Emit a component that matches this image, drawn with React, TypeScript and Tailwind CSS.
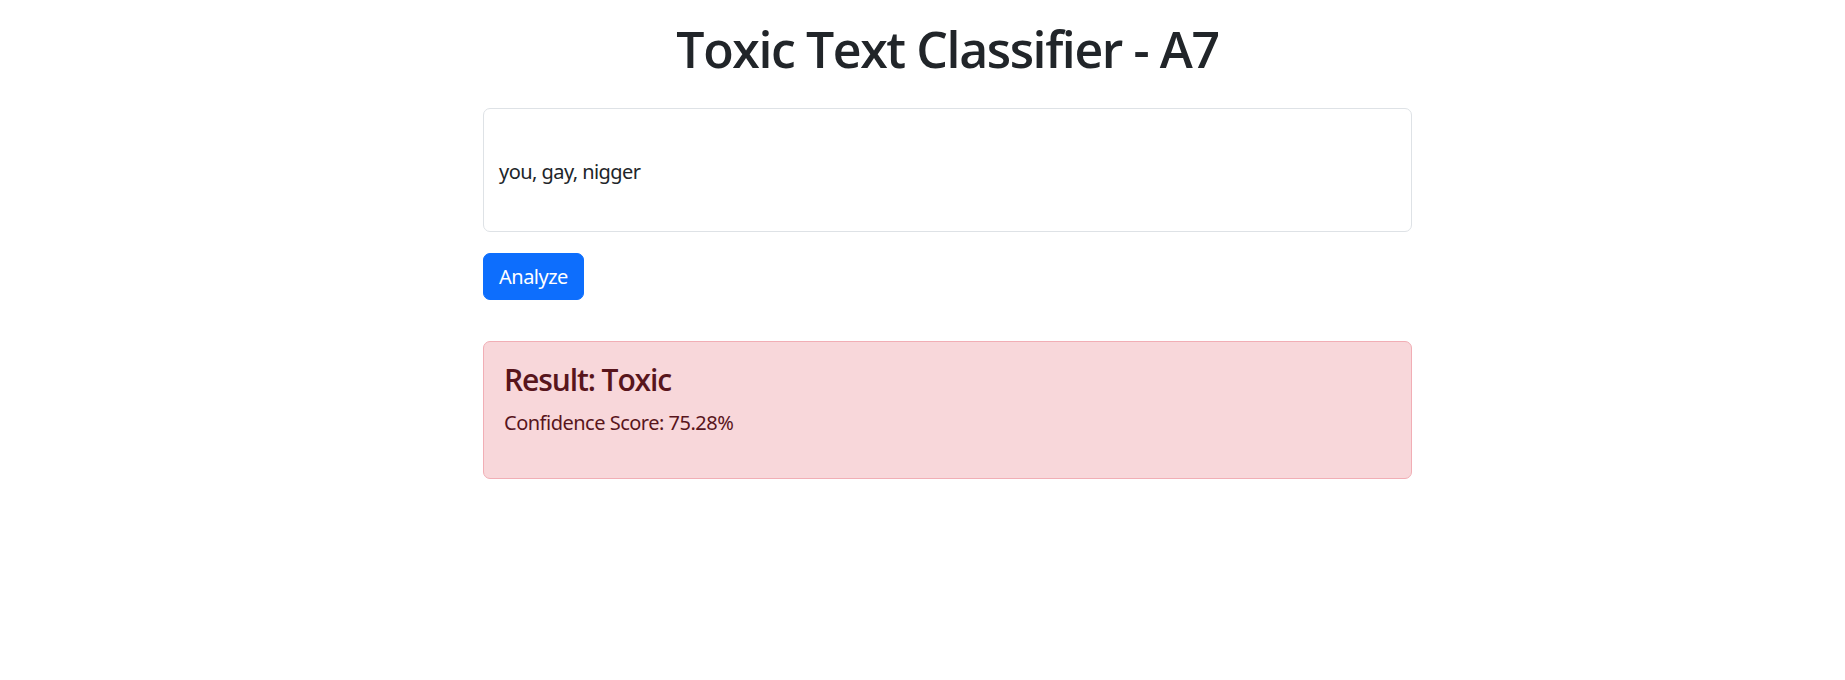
export default function App() {
  return (
    <div className="min-h-[680px] bg-white pl-[483px] font-['Noto_Sans',sans-serif] text-[#212529]">
      <div className="w-[929px] pt-[19px]">
        {/* Title */}
        <h1 className="text-center font-['Open_Sans',sans-serif] text-[50px] font-semibold leading-[1.2] tracking-[-1.4px]">
          Toxic Text Classifier - A7
        </h1>

        {/* Input */}
        <textarea
          className="mt-[29px] block h-[124px] w-full resize-none rounded-[7px] border border-[#dee2e6] bg-white px-[15px] pt-[48px] text-[20px] leading-[1.5] tracking-[-0.55px] text-[#212529] outline-none"
          defaultValue="you, gay, nigger"
        />

        <button className="mt-[21px] h-[47px] rounded-[7px] border border-[#0d6efd] bg-[#0d6efd] px-[15px] text-[20px] leading-[1.5] tracking-[-0.5px] text-white">
          Analyze
        </button>

        {/* Result */}
        <div className="mt-[41px] rounded-[7px] border border-[#f1aeb5] bg-[#f8d7da] p-[20px] text-[#58151c]">
          <h4 className="font-['Open_Sans',sans-serif] text-[30px] font-semibold leading-[1.2] tracking-[-1.1px]">
            Result: Toxic
          </h4>
          <p className="mt-[10px] mb-[20px] text-[20px] leading-[1.5] tracking-[-0.5px]">
            Confidence Score: 75.28%
          </p>
        </div>
      </div>
    </div>
  );
}
